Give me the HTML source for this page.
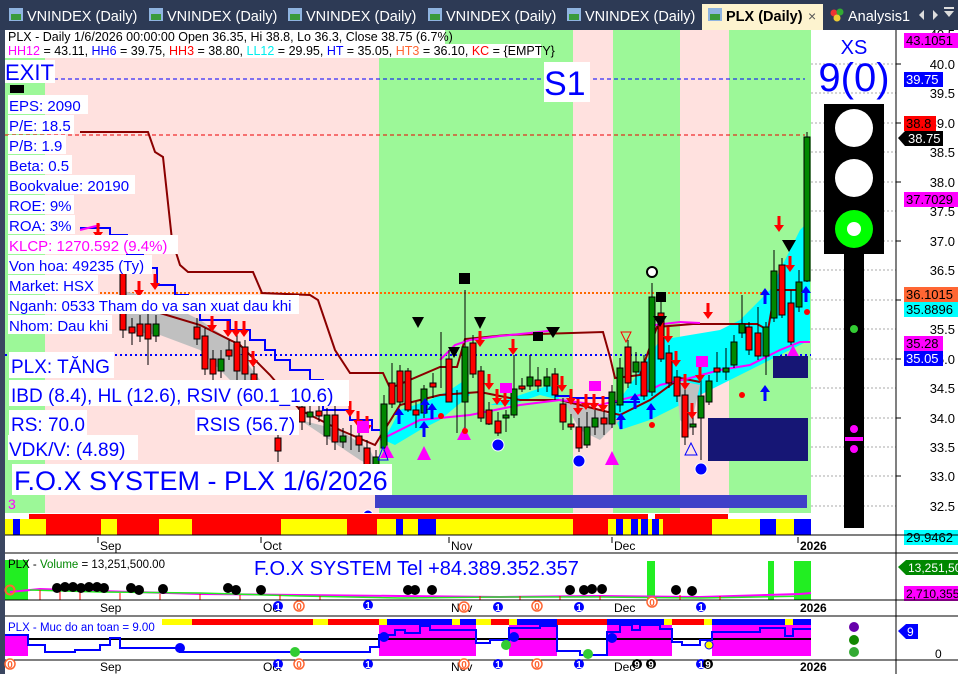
<!DOCTYPE html>
<html><head><meta charset="utf-8"><style>
html,body{margin:0;padding:0;width:958px;height:674px;overflow:hidden;background:#fff}
svg{display:block}
text{font-family:"Liberation Sans","Noto Sans CJK SC",sans-serif}
</style></head><body>
<svg width="958" height="674" viewBox="0 0 958 674" xmlns="http://www.w3.org/2000/svg">
<defs>
<g id="da"><rect x="-1.5" y="-9" width="3" height="9" fill="#f00"/><polygon points="-5,0 5,0 0,7" fill="#f00"/></g>
<g id="ua"><rect x="-1.5" y="0" width="3" height="9" fill="#00f"/><polygon points="-5,0 5,0 0,-7" fill="#00f"/></g>
</defs>
<!-- tab bar -->
<rect x="0" y="0" width="958" height="30" fill="#2d3a55"/>
<g font-size="14.5" fill="#fff">
<rect x="9" y="8" width="14" height="13" fill="#8fb4e0"/><rect x="11" y="14" width="10" height="6" fill="#3a9a3a"/><text x="27" y="21">VNINDEX (Daily)</text>
<rect x="149" y="8" width="14" height="13" fill="#8fb4e0"/><rect x="151" y="14" width="10" height="6" fill="#3a9a3a"/><text x="167" y="21">VNINDEX (Daily)</text>
<rect x="288" y="8" width="14" height="13" fill="#8fb4e0"/><rect x="290" y="14" width="10" height="6" fill="#3a9a3a"/><text x="306" y="21">VNINDEX (Daily)</text>
<rect x="428" y="8" width="14" height="13" fill="#8fb4e0"/><rect x="430" y="14" width="10" height="6" fill="#3a9a3a"/><text x="446" y="21">VNINDEX (Daily)</text>
<rect x="567" y="8" width="14" height="13" fill="#8fb4e0"/><rect x="569" y="14" width="10" height="6" fill="#3a9a3a"/><text x="585" y="21">VNINDEX (Daily)</text>
</g>
<rect x="702" y="4" width="121" height="26" fill="#fdf3cf"/>
<rect x="708" y="8" width="14" height="13" fill="#8fb4e0"/><rect x="710" y="14" width="10" height="6" fill="#3a9a3a"/>
<text x="726" y="21" font-size="14.5" font-weight="bold" fill="#000">PLX (Daily)</text>
<text x="808" y="21" font-size="14" fill="#555">×</text>
<circle cx="834" cy="13" r="3.5" fill="#e33"/><circle cx="840" cy="12" r="3.5" fill="#3a3"/><circle cx="837" cy="18" r="3.5" fill="#ec3"/>
<text x="848" y="21" font-size="14.5" fill="#fff">Analysis1</text>
<polygon points="924,10 924,20 919,15" fill="#ddd"/><polygon points="933,10 933,20 938,15" fill="#ddd"/>
<polygon points="944,11 954,11 949,17" fill="#ddd"/><rect x="944" y="7" width="10" height="2" fill="#ddd"/>
<!-- left border -->
<rect x="0" y="30" width="5" height="644" fill="#3a4660"/>
<!-- bands main -->
<rect x="5" y="30" width="806" height="483" fill="#ffe1df"/>
<g fill="#9cf898">
<rect x="5" y="58" width="40" height="455"/>
<rect x="379" y="30" width="194" height="483"/>
<rect x="613" y="30" width="67" height="483"/>
<rect x="729" y="30" width="82" height="483"/>
</g>
<rect x="811" y="30" width="85" height="505" fill="#fff"/>
<!-- grid lines right -->
<g stroke="#aaa" stroke-dasharray="2,2">
<line x1="811" y1="64" x2="896" y2="64"/><line x1="811" y1="93" x2="896" y2="93"/><line x1="811" y1="123" x2="896" y2="123"/><line x1="811" y1="152" x2="896" y2="152"/><line x1="811" y1="182" x2="896" y2="182"/><line x1="811" y1="211" x2="896" y2="211"/><line x1="811" y1="241" x2="896" y2="241"/><line x1="811" y1="270" x2="896" y2="270"/><line x1="811" y1="300" x2="896" y2="300"/><line x1="811" y1="329" x2="896" y2="329"/><line x1="811" y1="359" x2="896" y2="359"/><line x1="811" y1="388" x2="896" y2="388"/><line x1="811" y1="418" x2="896" y2="418"/><line x1="811" y1="447" x2="896" y2="447"/><line x1="811" y1="476" x2="896" y2="476"/><line x1="811" y1="506" x2="896" y2="506"/>
</g>
<!-- level lines -->
<line x1="5" y1="79" x2="805" y2="79" stroke="#00f" stroke-dasharray="4,3"/>
<line x1="5" y1="135" x2="805" y2="135" stroke="#e00" stroke-dasharray="4,3"/>
<line x1="100" y1="293" x2="811" y2="293" stroke="#f60" stroke-width="2" stroke-dasharray="2,2"/>
<line x1="5" y1="355" x2="811" y2="355" stroke="#00f" stroke-width="2" stroke-dasharray="2,3"/>
<!-- fills -->
<polygon points="384,440 400,410 430,400 450,390 465,380 470,395 440,420 420,430 395,445" fill="#0ff"/>
<polygon points="490,405 520,395 550,385 560,400 540,395 510,405" fill="#0ff"/>
<polygon points="612,410 630,385 660,340 690,335 720,330 740,320 770,290 800,230 810,220 810,340 780,355 750,370 720,385 690,400 650,420 620,430" fill="#0ff"/>
<polygon points="120,290 160,300 200,320 230,340 260,380 270,400 250,400 230,380 200,350 160,335 120,330" fill="#c0c0c0"/>
<polygon points="300,420 340,430 370,450 380,470 360,460 330,440" fill="#c0c0c0"/>
<polygon points="560,395 600,410 620,420 600,440 580,430" fill="#c0c0c0"/>
<polygon points="676,380 700,385 690,430 680,420" fill="#c0c0c0"/>
<!-- maroon line -->
<polyline fill="none" stroke="#8b0000" stroke-width="2" points="80,132 148,132 155,152 163,157 172,240 180,265 188,272 253,272 262,293 310,295 318,300 335,350 350,373 383,373 390,388 398,385 440,367 457,367 465,339 507,335 603,332 610,357 615,378 640,375 657,327 693,324 757,324 768,330 775,290 800,290"/>
<polyline fill="none" stroke="#8b0000" stroke-width="2" points="150,310 200,325 240,345 270,375 300,410 340,430 375,445 400,405 440,395 480,392 520,400 560,400 600,410 620,415 650,400 680,378 700,382"/>
<!-- blue stepped -->
<polyline fill="none" stroke="#00f" stroke-width="2" points="80,228 110,228 110,235 127,235 127,255 143,255 143,268 157,268 157,285 175,285 175,295 188,295 188,305 200,305 200,320 230,320 230,330 250,330 250,340 265,340 265,350 275,350 275,360 290,360 290,370 310,370 310,380 323,380 323,410 350,410 350,420 372,420 372,430 380,430"/>
<polyline fill="none" stroke="#00f" stroke-width="2" points="555,396 570,396 570,398 610,398 610,402 640,402"/>
<!-- magenta lines -->
<polyline fill="none" stroke="#f0f" stroke-width="2" points="380,440 420,420 470,415 520,405 560,400 600,405 640,395 660,385 690,378 720,370 750,365 780,350 800,342 810,342"/>
<polyline fill="none" stroke="#f0f" stroke-width="2" points="440,360 455,345 470,340 500,336 530,333 556,330"/>
<polyline fill="none" stroke="#f0f" stroke-width="2" points="655,325 680,322 700,323"/>
<polyline fill="none" stroke="#f0f" stroke-width="2" points="80,230 100,225"/>
<!-- candles -->
<g stroke="#000" stroke-width="1">
<line x1="123" y1="265" x2="123" y2="338"/><line x1="132" y1="318" x2="132" y2="345"/><line x1="140" y1="315" x2="140" y2="342"/><line x1="148" y1="300" x2="148" y2="365"/><line x1="156" y1="315" x2="156" y2="342"/>
<line x1="197" y1="318" x2="197" y2="345"/><line x1="205" y1="328" x2="205" y2="375"/><line x1="213" y1="350" x2="213" y2="380"/><line x1="221" y1="350" x2="221" y2="378"/><line x1="229" y1="340" x2="229" y2="360"/><line x1="237" y1="335" x2="237" y2="380"/><line x1="245" y1="340" x2="245" y2="380"/><line x1="254" y1="366" x2="254" y2="392"/>
<line x1="278" y1="430" x2="278" y2="462"/><line x1="302" y1="400" x2="302" y2="430"/><line x1="310" y1="405" x2="310" y2="425"/><line x1="319" y1="405" x2="319" y2="422"/><line x1="327" y1="408" x2="327" y2="445"/><line x1="335" y1="405" x2="335" y2="450"/><line x1="343" y1="428" x2="343" y2="448"/><line x1="351" y1="425" x2="351" y2="450"/><line x1="359" y1="428" x2="359" y2="452"/><line x1="367" y1="440" x2="367" y2="490"/><line x1="376" y1="450" x2="376" y2="475"/>
<line x1="384" y1="395" x2="384" y2="455"/><line x1="392" y1="363" x2="392" y2="408"/><line x1="400" y1="365" x2="400" y2="405"/><line x1="408" y1="368" x2="408" y2="412"/><line x1="416" y1="402" x2="416" y2="428"/><line x1="424" y1="385" x2="424" y2="418"/><line x1="433" y1="373" x2="433" y2="398"/><line x1="441" y1="332" x2="441" y2="388"/><line x1="449" y1="350" x2="449" y2="402"/><line x1="457" y1="390" x2="457" y2="433"/><line x1="465" y1="290" x2="465" y2="433"/><line x1="473" y1="335" x2="473" y2="378"/><line x1="481" y1="366" x2="481" y2="422"/><line x1="489" y1="402" x2="489" y2="425"/><line x1="498" y1="412" x2="498" y2="436"/><line x1="506" y1="410" x2="506" y2="432"/><line x1="514" y1="355" x2="514" y2="418"/><line x1="522" y1="378" x2="522" y2="392"/><line x1="530" y1="355" x2="530" y2="390"/><line x1="538" y1="367" x2="538" y2="392"/><line x1="547" y1="368" x2="547" y2="392"/><line x1="555" y1="368" x2="555" y2="400"/><line x1="563" y1="398" x2="563" y2="430"/><line x1="571" y1="414" x2="571" y2="430"/><line x1="579" y1="418" x2="579" y2="452"/><line x1="587" y1="412" x2="587" y2="448"/><line x1="595" y1="410" x2="595" y2="435"/><line x1="604" y1="410" x2="604" y2="435"/><line x1="612" y1="385" x2="612" y2="428"/><line x1="620" y1="358" x2="620" y2="412"/><line x1="628" y1="340" x2="628" y2="388"/><line x1="636" y1="352" x2="636" y2="385"/><line x1="644" y1="355" x2="644" y2="400"/><line x1="652" y1="283" x2="652" y2="396"/><line x1="661" y1="300" x2="661" y2="362"/><line x1="669" y1="345" x2="669" y2="388"/><line x1="677" y1="370" x2="677" y2="402"/><line x1="685" y1="388" x2="685" y2="445"/><line x1="693" y1="415" x2="693" y2="435"/><line x1="701" y1="378" x2="701" y2="460"/><line x1="709" y1="375" x2="709" y2="405"/><line x1="717" y1="352" x2="717" y2="382"/><line x1="726" y1="348" x2="726" y2="380"/><line x1="734" y1="335" x2="734" y2="368"/><line x1="742" y1="295" x2="742" y2="338"/><line x1="749" y1="322" x2="749" y2="355"/><line x1="758" y1="307" x2="758" y2="360"/><line x1="766" y1="322" x2="766" y2="375"/><line x1="774" y1="250" x2="774" y2="322"/><line x1="782" y1="258" x2="782" y2="318"/><line x1="791" y1="290" x2="791" y2="345"/><line x1="799" y1="270" x2="799" y2="312"/><line x1="807" y1="132" x2="807" y2="282"/>
</g>
<g stroke="#000" stroke-width="1">
<g fill="#f00">
<rect x="120" y="273" width="6" height="57"/><rect x="129" y="327" width="6" height="6"/><rect x="137" y="324" width="6" height="12"/><rect x="145" y="324" width="6" height="15"/>
<rect x="194" y="327" width="6" height="12"/><rect x="202" y="336" width="6" height="33"/><rect x="210" y="359" width="6" height="15"/><rect x="226" y="350" width="6" height="6"/><rect x="234" y="342" width="6" height="29"/><rect x="242" y="347" width="6" height="27"/><rect x="251" y="374" width="6" height="13"/>
<rect x="275" y="438" width="6" height="13"/><rect x="299" y="407" width="6" height="15"/><rect x="316" y="411" width="6" height="5"/><rect x="332" y="415" width="6" height="27"/><rect x="356" y="436" width="6" height="9"/><rect x="364" y="448" width="6" height="29"/>
<rect x="389" y="383" width="6" height="21"/><rect x="397" y="371" width="6" height="31"/><rect x="405" y="371" width="6" height="39"/><rect x="413" y="410" width="6" height="5"/><rect x="430" y="383" width="6" height="4"/><rect x="446" y="359" width="6" height="43"/><rect x="470" y="343" width="6" height="31"/><rect x="478" y="371" width="6" height="47"/><rect x="486" y="410" width="6" height="14"/><rect x="495" y="421" width="6" height="12"/><rect x="519" y="386" width="6" height="3"/><rect x="535" y="380" width="6" height="6"/><rect x="552" y="374" width="6" height="21"/><rect x="560" y="404" width="6" height="18"/><rect x="568" y="424" width="6" height="3"/><rect x="576" y="427" width="6" height="21"/><rect x="601" y="418" width="6" height="6"/><rect x="625" y="347" width="6" height="36"/><rect x="641" y="362" width="6" height="34"/><rect x="658" y="313" width="6" height="46"/><rect x="666" y="353" width="6" height="30"/><rect x="674" y="377" width="6" height="19"/><rect x="682" y="395" width="6" height="42"/><rect x="714" y="368" width="6" height="4"/><rect x="746" y="327" width="6" height="23"/><rect x="755" y="333" width="6" height="23"/><rect x="779" y="265" width="6" height="50"/><rect x="788" y="303" width="6" height="39"/>
</g>
<g fill="#080">
<rect x="153" y="324" width="6" height="12"/><rect x="218" y="359" width="6" height="12"/><rect x="307" y="412" width="6" height="5"/><rect x="324" y="415" width="6" height="21"/><rect x="340" y="436" width="6" height="6"/><rect x="373" y="457" width="6" height="10"/>
<rect x="381" y="404" width="6" height="44"/><rect x="421" y="389" width="6" height="24"/><rect x="462" y="347" width="6" height="55"/><rect x="503" y="415" width="6" height="3"/><rect x="511" y="389" width="6" height="26"/><rect x="527" y="377" width="6" height="9"/><rect x="544" y="377" width="6" height="9"/><rect x="584" y="427" width="6" height="18"/><rect x="592" y="418" width="6" height="9"/><rect x="609" y="392" width="6" height="32"/><rect x="617" y="368" width="6" height="37"/><rect x="633" y="362" width="6" height="10"/><rect x="649" y="297" width="6" height="95"/><rect x="690" y="424" width="6" height="3"/><rect x="698" y="396" width="6" height="22"/><rect x="706" y="381" width="6" height="21"/><rect x="723" y="368" width="6" height="4"/><rect x="731" y="342" width="6" height="23"/><rect x="739" y="324" width="6" height="9"/><rect x="763" y="327" width="6" height="29"/><rect x="771" y="271" width="6" height="47"/><rect x="796" y="282" width="6" height="25"/><rect x="804" y="137" width="6" height="144"/>
</g>
</g>
<!-- arrows -->
<use href="#da" x="98" y="232"/><use href="#da" x="155" y="283"/><use href="#da" x="139" y="290"/>
<use href="#da" x="212" y="325"/><use href="#da" x="228" y="330"/><use href="#da" x="236" y="330"/><use href="#da" x="244" y="330"/><use href="#da" x="253" y="360"/><use href="#da" x="350" y="410"/><use href="#da" x="358" y="420"/><use href="#da" x="367" y="425"/>
<use href="#da" x="480" y="340"/><use href="#da" x="489" y="383"/><use href="#da" x="513" y="348"/><use href="#da" x="497" y="398"/><use href="#da" x="505" y="400"/><use href="#da" x="562" y="385"/><use href="#da" x="571" y="398"/><use href="#da" x="578" y="408"/><use href="#da" x="586" y="403"/><use href="#da" x="594" y="403"/><use href="#da" x="603" y="405"/><use href="#da" x="668" y="336"/><use href="#da" x="676" y="360"/><use href="#da" x="685" y="383"/><use href="#da" x="692" y="412"/><use href="#da" x="708" y="312"/><use href="#da" x="700" y="375"/><use href="#da" x="790" y="265"/><use href="#da" x="779" y="225"/>
<use href="#ua" x="399" y="415"/><use href="#ua" x="425" y="405"/><use href="#ua" x="432" y="410"/><use href="#ua" x="424" y="428"/><use href="#ua" x="621" y="420"/><use href="#ua" x="635" y="400"/><use href="#ua" x="651" y="410"/><use href="#ua" x="765" y="295"/><use href="#ua" x="765" y="392"/><use href="#ua" x="806" y="293"/>
<!-- markers -->
<g fill="#f0f"><polygon points="387,445 380,458 394,458"/><polygon points="424,446 417,460 431,460"/><polygon points="464,427 457,440 471,440"/><polygon points="612,451 605,465 619,465"/><polygon points="793,345 786,358 800,358"/>
<rect x="500" y="383" width="12" height="10"/><rect x="589" y="381" width="12" height="10"/><rect x="696" y="356" width="12" height="11"/><rect x="357" y="421" width="12" height="12"/></g>
<g fill="#000"><polygon points="412,317 424,317 418,328"/><polygon points="474,317 486,317 480,329"/><polygon points="448,347 460,347 454,358"/><polygon points="546,327 560,327 553,338"/><polygon points="782,240 796,240 789,252"/><polygon points="653,316 667,316 660,327"/>
<rect x="459" y="273" width="11" height="11"/><rect x="656" y="292" width="10" height="10"/><rect x="533" y="332" width="10" height="9"/></g>
<circle cx="652" cy="272" r="5" fill="#fff" stroke="#000" stroke-width="2"/>
<polygon points="621,332 631,332 626,342" fill="none" stroke="#f00"/>
<polygon points="691,443 685,455 697,455" fill="none" stroke="#00f"/>
<polygon points="383,447 378,460 388,460" fill="none" stroke="#00f"/>
<g fill="#00f" stroke="#fff" stroke-width="1"><circle cx="498" cy="445" r="6"/><circle cx="579" cy="461" r="6"/><circle cx="701" cy="469" r="6"/><circle cx="368" cy="515" r="5"/></g>
<g fill="#f00"><circle cx="441" cy="416" r="3"/><circle cx="465" cy="431" r="3"/><circle cx="652" cy="425" r="3"/><circle cx="742" cy="395" r="3"/><circle cx="807" cy="312" r="3"/></g>
<!-- navy blocks -->
<rect x="773" y="356" width="35" height="22" fill="#161675"/>
<rect x="708" y="418" width="100" height="43" fill="#161675"/>
<rect x="375" y="495" width="432" height="13" fill="#4040c8"/>
<!-- header -->
<rect x="5" y="30" width="440" height="28" fill="#fff"/><rect x="445" y="44" width="96" height="14" fill="#fff"/>
<text x="8" y="41" font-size="12.5" fill="#000">PLX - Daily 1/6/2026 00:00:00 Open 36.35, Hi 38.8, Lo 36.3, Close 38.75 (6.7%)</text>
<text x="8" y="55" font-size="12.5"><tspan fill="#f0f">HH12</tspan><tspan fill="#000"> = 43.11, </tspan><tspan fill="#00f">HH6</tspan><tspan fill="#000"> = 39.75, </tspan><tspan fill="#f00">HH3</tspan><tspan fill="#000"> = 38.80, </tspan><tspan fill="#0ee">LL12</tspan><tspan fill="#000"> = 29.95, </tspan><tspan fill="#00f">HT </tspan><tspan fill="#000"> = 35.05, </tspan><tspan fill="#f63">HT3 </tspan><tspan fill="#000"> = 36.10, </tspan><tspan fill="#f00">KC</tspan><tspan fill="#000"> = {EMPTY}</tspan></text>
<!-- left texts -->
<g fill="#fff">
<rect x="5" y="60" width="50" height="23"/>
<rect x="8" y="95" width="80" height="19"/><rect x="8" y="115" width="66" height="19"/><rect x="8" y="135" width="58" height="19"/><rect x="8" y="155" width="64" height="19"/><rect x="8" y="175" width="127" height="19"/><rect x="8" y="195" width="66" height="19"/><rect x="8" y="215" width="67" height="19"/><rect x="8" y="235" width="170" height="19"/><rect x="8" y="255" width="144" height="19"/><rect x="8" y="275" width="90" height="19"/><rect x="8" y="295" width="291" height="19"/><rect x="8" y="315" width="104" height="19"/>
<rect x="9" y="352" width="105" height="26"/><rect x="9" y="380" width="340" height="26"/><rect x="9" y="410" width="78" height="25"/><rect x="195" y="410" width="104" height="25"/><rect x="8" y="435" width="130" height="25"/><rect x="12" y="464" width="380" height="31"/>
<rect x="544" y="62" width="46" height="40"/>
</g>
<g fill="#00f">
<text x="5" y="80" font-size="22">EXIT</text>
<rect x="10" y="85" width="14" height="8" fill="#000"/>
<g font-size="15"><text x="9" y="111">EPS: 2090</text><text x="9" y="131">P/E: 18.5</text><text x="9" y="151">P/B: 1.9</text><text x="9" y="171">Beta: 0.5</text><text x="9" y="191">Bookvalue: 20190</text><text x="9" y="211">ROE: 9%</text><text x="9" y="231">ROA: 3%</text><text x="9" y="251" fill="#f0f">KLCP: 1270.592 (9.4%)</text><text x="9" y="271">Von hoa: 49235 (Ty)</text><text x="9" y="291">Market: HSX</text><text x="9" y="311">Nganh: 0533 Tham do va san xuat dau khi</text><text x="9" y="331">Nhom: Dau khi</text></g>
<g font-size="19"><text x="11" y="373">PLX: TĂNG</text><text x="11" y="402">IBD (8.4), HL (12.6), RSIV (60.1_10.6)</text><text x="11" y="431">RS: 70.0</text><text x="196" y="431">RSIS (56.7)</text><text x="9" y="456">VDK/V:  (4.89)</text></g>
<text x="14" y="490" font-size="27">F.O.X SYSTEM - PLX 1/6/2026</text>
<text x="8" y="509" font-size="14" fill="#f0f">3</text>
<text x="544" y="95" font-size="34">S1</text>
</g>
<!-- color bar -->
<rect x="5" y="513" width="806" height="6" fill="#fff"/>
<rect x="29" y="514" width="619" height="5" fill="#f00"/><rect x="655" y="514" width="73" height="5" fill="#f00"/>
<rect x="5" y="519" width="806" height="16" fill="#ff0"/>
<g fill="#f00"><rect x="46" y="519" width="55" height="16"/><rect x="117" y="519" width="42" height="16"/><rect x="192" y="519" width="89" height="16"/><rect x="347" y="519" width="30" height="16"/><rect x="573" y="519" width="35" height="16"/><rect x="663" y="519" width="49" height="16"/></g>
<g fill="#00f"><rect x="13" y="519" width="7" height="16"/><rect x="396" y="519" width="7" height="16"/><rect x="418" y="519" width="18" height="16"/><rect x="616" y="519" width="7" height="16"/><rect x="631" y="519" width="7" height="16"/><rect x="641" y="519" width="7" height="16"/><rect x="652" y="519" width="7" height="16"/><rect x="760" y="519" width="16" height="16"/><rect x="794" y="519" width="17" height="16"/></g>
<!-- traffic light -->
<text x="854" y="54" font-size="20" fill="#00f" text-anchor="middle">XS</text>
<text x="854" y="91" font-size="40" fill="#00f" text-anchor="middle">9(0)</text>
<rect x="824" y="104" width="60" height="150" fill="#000"/>
<circle cx="854" cy="128" r="19" fill="#fff"/><circle cx="854" cy="178" r="19" fill="#fff"/>
<circle cx="854" cy="229" r="19" fill="#0f0"/><circle cx="854" cy="229" r="7" fill="#fff"/>
<rect x="844" y="253" width="20" height="275" fill="#000"/>
<circle cx="854" cy="329" r="4" fill="#3c3"/><circle cx="854" cy="429" r="4" fill="#f0f"/><circle cx="854" cy="449" r="4" fill="#f0f"/><rect x="845" y="437" width="18" height="4" fill="#f0f"/>
<!-- axis -->
<line x1="896" y1="30" x2="896" y2="674" stroke="#000"/>
<g stroke="#000"><line x1="896" y1="64" x2="901" y2="64"/><line x1="896" y1="123" x2="901" y2="123"/><line x1="896" y1="182" x2="901" y2="182"/><line x1="896" y1="241" x2="901" y2="241"/><line x1="896" y1="300" x2="901" y2="300"/><line x1="896" y1="359" x2="901" y2="359"/><line x1="896" y1="418" x2="901" y2="418"/><line x1="896" y1="476" x2="901" y2="476"/></g>
<g font-size="13" fill="#000" text-anchor="end">
<text x="955" y="39">40.5</text><text x="955" y="69">40.0</text><text x="955" y="98">39.5</text><text x="955" y="128">39.0</text><text x="955" y="157">38.5</text><text x="955" y="187">38.0</text><text x="955" y="216">37.5</text><text x="955" y="246">37.0</text><text x="955" y="275">36.5</text><text x="955" y="334">35.5</text><text x="955" y="364">35.0</text><text x="955" y="393">34.5</text><text x="955" y="423">34.0</text><text x="955" y="452">33.5</text><text x="955" y="481">33.0</text><text x="955" y="511">32.5</text>
</g>
<g font-size="13">
<rect x="904" y="33" width="54" height="15" fill="#f0f"/><text x="906" y="45" fill="#000">43.1051</text>
<rect x="904" y="72" width="39" height="15" fill="#00f"/><text x="906" y="84" fill="#fff">39.75</text>
<rect x="904" y="116" width="32" height="15" fill="#f00"/><text x="906" y="128" fill="#000">38.8</text>
<polygon points="898,138 905,131 943,131 943,146 905,146" fill="#000"/><text x="908" y="143" fill="#fff">38.75</text>
<rect x="904" y="192" width="54" height="15" fill="#f0f"/><text x="906" y="204" fill="#000">37.7029</text>
<rect x="904" y="287" width="54" height="15" fill="#f63"/><text x="906" y="299" fill="#000">36.1015</text>
<rect x="904" y="302" width="54" height="15" fill="#0ff"/><text x="906" y="314" fill="#000">35.8896</text>
<rect x="904" y="336" width="39" height="15" fill="#f0f"/><text x="906" y="348" fill="#000">35.28</text>
<rect x="904" y="351" width="39" height="15" fill="#00f"/><text x="906" y="363" fill="#fff">35.05</text>
<rect x="904" y="530" width="54" height="15" fill="#0ff"/><text x="906" y="542" fill="#000">29.9462</text>
</g>
<!-- main bottom/date axis -->
<line x1="5" y1="535" x2="958" y2="535" stroke="#000"/>
<line x1="5" y1="553" x2="958" y2="553" stroke="#000"/>
<g font-size="12" fill="#000"><text x="100" y="550">Sep</text><text x="263" y="550">Oct</text><text x="451" y="550">Nov</text><text x="614" y="550">Dec</text><text x="800" y="550" font-weight="bold">2026</text></g>
<g stroke="#000"><line x1="98" y1="537" x2="98" y2="543"/><line x1="261" y1="537" x2="261" y2="543"/><line x1="449" y1="537" x2="449" y2="543"/><line x1="612" y1="537" x2="612" y2="543"/><line x1="798" y1="537" x2="798" y2="543"/></g>
<!-- volume pane -->
<rect x="5" y="560" width="23" height="40" fill="#2e2"/>
<rect x="647" y="561" width="8" height="39" fill="#2e2"/><rect x="768" y="561" width="6" height="39" fill="#2e2"/><rect x="794" y="561" width="17" height="39" fill="#2e2"/>
<polyline fill="none" stroke="#f0f" stroke-width="2" points="10,592 40,589 100,591 200,594 300,595 400,596 500,597 600,596 700,597 800,594 811,593"/>
<polyline fill="none" stroke="#2e2" stroke-width="1.5" points="30,590 100,592 200,593 300,596 400,598 500,597 600,597 700,598 811,596"/>
<g stroke="#f00"><line x1="40" y1="590" x2="40" y2="600"/><line x1="60" y1="591" x2="60" y2="600"/><line x1="80" y1="592" x2="80" y2="600"/><line x1="120" y1="593" x2="120" y2="600"/><line x1="160" y1="594" x2="160" y2="600"/><line x1="200" y1="594" x2="200" y2="600"/><line x1="240" y1="595" x2="240" y2="600"/><line x1="280" y1="595" x2="280" y2="600"/><line x1="320" y1="596" x2="320" y2="600"/><line x1="480" y1="596" x2="480" y2="600"/><line x1="520" y1="596" x2="520" y2="600"/><line x1="560" y1="596" x2="560" y2="600"/><line x1="600" y1="596" x2="600" y2="600"/><line x1="680" y1="595" x2="680" y2="600"/><line x1="720" y1="596" x2="720" y2="600"/></g>
<g fill="#000"><circle cx="57" cy="588" r="5"/><circle cx="65" cy="587" r="5"/><circle cx="73" cy="587" r="5"/><circle cx="81" cy="588" r="5"/><circle cx="89" cy="587" r="5"/><circle cx="97" cy="587" r="5"/><circle cx="104" cy="588" r="5"/><circle cx="131" cy="588" r="5"/><circle cx="139" cy="590" r="5"/><circle cx="163" cy="589" r="5"/><circle cx="228" cy="588" r="5"/><circle cx="236" cy="590" r="5"/><circle cx="261" cy="590" r="5"/><circle cx="408" cy="590" r="5"/><circle cx="415" cy="590" r="5"/><circle cx="432" cy="590" r="5"/><circle cx="570" cy="590" r="5"/><circle cx="584" cy="590" r="5"/><circle cx="592" cy="589" r="5"/><circle cx="602" cy="589" r="5"/><circle cx="676" cy="590" r="5"/><circle cx="692" cy="591" r="5"/></g>
<circle cx="10" cy="590" r="4.5" fill="none" stroke="#f63" stroke-width="2"/>
<text x="8" y="568" font-size="11.5"><tspan fill="#000">PLX - </tspan><tspan fill="#080">Volume</tspan><tspan fill="#000"> = 13,251,500.00</tspan></text>
<text x="254" y="575" font-size="20" fill="#00f">F.O.X SYSTEM Tel +84.389.352.357</text>
<polygon points="898,567 906,560 958,560 958,575 906,575" fill="#080"/><text x="908" y="572" font-size="12" fill="#fff">13,251,500</text>
<rect x="904" y="586" width="54" height="15" fill="#f0f"/><text x="906" y="598" font-size="12" fill="#000">2,710,355</text>
<line x1="5" y1="600" x2="958" y2="600" stroke="#000"/>
<line x1="5" y1="616" x2="958" y2="616" stroke="#000"/>
<g font-size="12" fill="#000"><text x="100" y="612">Sep</text><text x="263" y="612">Oct</text><text x="451" y="612">Nov</text><text x="614" y="612">Dec</text><text x="800" y="612" font-weight="bold">2026</text></g>
<g font-size="10" font-weight="bold" text-anchor="middle">
<circle cx="278" cy="606" r="5" fill="#00f"/><text x="278" y="610" fill="#fff">1</text>
<circle cx="299" cy="606" r="5" fill="#fff" stroke="#f63" stroke-width="1.5"/><text x="299" y="610" fill="#f63">0</text>
<circle cx="368" cy="605" r="5" fill="#00f"/><text x="368" y="609" fill="#fff">1</text>
<circle cx="464" cy="607" r="5" fill="#fff" stroke="#f63" stroke-width="1.5"/><text x="464" y="611" fill="#f63">0</text>
<circle cx="498" cy="607" r="5" fill="#00f"/><text x="498" y="611" fill="#fff">1</text>
<circle cx="537" cy="606" r="5" fill="#fff" stroke="#f63" stroke-width="1.5"/><text x="537" y="610" fill="#f63">0</text>
<circle cx="579" cy="607" r="5" fill="#00f"/><text x="579" y="611" fill="#fff">1</text>
<circle cx="652" cy="602" r="5" fill="#fff" stroke="#f63" stroke-width="1.5"/><text x="652" y="606" fill="#f63">0</text>
<circle cx="701" cy="607" r="5" fill="#00f"/><text x="701" y="611" fill="#fff">1</text>
</g>
<!-- safety pane -->
<rect x="162" y="619" width="649" height="6" fill="#f00"/>
<g fill="#ff0"><rect x="162" y="619" width="30" height="6"/><rect x="313" y="619" width="15" height="6"/><rect x="379" y="619" width="8" height="6"/><rect x="452" y="619" width="8" height="6"/><rect x="476" y="619" width="15" height="6"/><rect x="509" y="619" width="8" height="6"/><rect x="664" y="619" width="8" height="6"/><rect x="704" y="619" width="8" height="6"/><rect x="785" y="619" width="8" height="6"/></g>
<g fill="#00f"><rect x="387" y="619" width="65" height="6"/><rect x="460" y="619" width="16" height="6"/><rect x="517" y="619" width="40" height="6"/><rect x="607" y="619" width="57" height="6"/><rect x="712" y="619" width="73" height="6"/><rect x="793" y="619" width="18" height="6"/></g>
<g fill="#f0f"><rect x="5" y="635" width="23" height="21"/><rect x="379" y="625" width="97" height="31"/><rect x="509" y="625" width="48" height="31"/><rect x="607" y="625" width="65" height="31"/><rect x="712" y="625" width="99" height="31"/></g>
<line x1="28" y1="639" x2="811" y2="639" stroke="#000" stroke-width="2"/>
<polyline fill="none" stroke="#00f" stroke-width="2" points="5,635 28,635 28,645 45,645 45,652 75,652 75,650 100,650 100,645 110,645 110,638 120,638 120,648 180,648 180,652 370,652 370,647 379,647 379,635 395,635 395,630 405,630 405,633 420,633 420,626 430,626 430,630 476,630 476,643 490,643 490,640 509,640 509,628 540,628 540,626 557,626 557,651 580,651 580,655 607,655 607,632 620,632 620,625 632,625 632,630 640,630 640,625 660,625 660,629 672,629 672,642 682,642 682,645 700,645 700,640 712,640 712,632 760,632 760,628 785,628 785,636 793,636 793,629 811,629"/>
<circle cx="180" cy="648" r="5" fill="#00f"/><circle cx="295" cy="652" r="5" fill="#3c3"/><circle cx="384" cy="637" r="5" fill="#00f"/><circle cx="514" cy="637" r="5" fill="#00f"/><circle cx="506" cy="645" r="5" fill="#3c3"/><circle cx="588" cy="654" r="5" fill="#3c3"/><circle cx="612" cy="638" r="5" fill="#00f"/><circle cx="709" cy="645" r="4" fill="#ff0" stroke="#00f"/>
<text x="8" y="631" font-size="11.5" fill="#00f">PLX - Muc do an toan = 9.00</text>
<circle cx="854" cy="627" r="5" fill="#60a"/><circle cx="854" cy="640" r="5" fill="#180"/><circle cx="854" cy="652" r="5" fill="#3a3"/>
<polygon points="898,631 906,624 918,624 918,639 906,639" fill="#00f"/><text x="907" y="636" font-size="12" fill="#fff">9</text>
<text x="935" y="658" font-size="12" fill="#000">0</text>
<line x1="5" y1="660" x2="958" y2="660" stroke="#000"/>
<g font-size="12" fill="#000"><text x="100" y="671">Sep</text><text x="263" y="671">Oct</text><text x="451" y="671">Nov</text><text x="614" y="671">Dec</text><text x="800" y="671" font-weight="bold">2026</text></g>
<g font-size="10" font-weight="bold" text-anchor="middle">
<circle cx="10" cy="664" r="5" fill="#fff" stroke="#f63" stroke-width="1.5"/><text x="10" y="668" fill="#f63">0</text>
<circle cx="278" cy="664" r="5" fill="#00f"/><text x="278" y="668" fill="#fff">1</text>
<circle cx="299" cy="664" r="5" fill="#fff" stroke="#f63" stroke-width="1.5"/><text x="299" y="668" fill="#f63">0</text>
<circle cx="368" cy="664" r="5" fill="#00f"/><text x="368" y="668" fill="#fff">1</text>
<circle cx="464" cy="664" r="5" fill="#fff" stroke="#f63" stroke-width="1.5"/><text x="464" y="668" fill="#f63">0</text>
<circle cx="498" cy="664" r="5" fill="#00f"/><text x="498" y="668" fill="#fff">1</text>
<circle cx="537" cy="664" r="5" fill="#fff" stroke="#f63" stroke-width="1.5"/><text x="537" y="668" fill="#f63">0</text>
<circle cx="579" cy="664" r="5" fill="#00f"/><text x="579" y="668" fill="#fff">1</text>
<circle cx="637" cy="664" r="5" fill="#000"/><text x="637" y="668" fill="#fff">9</text>
<circle cx="651" cy="664" r="5" fill="#000"/><text x="651" y="668" fill="#fff">9</text>
<circle cx="701" cy="664" r="5" fill="#00f"/><text x="701" y="668" fill="#fff">1</text>
<circle cx="708" cy="664" r="5" fill="#000"/><text x="708" y="668" fill="#fff">9</text>
</g>
</svg>
</body></html>
